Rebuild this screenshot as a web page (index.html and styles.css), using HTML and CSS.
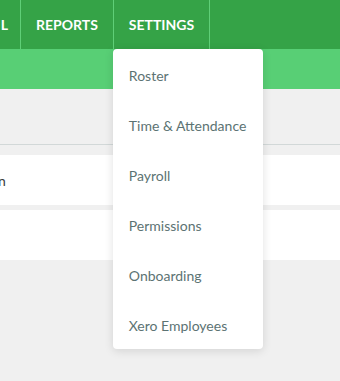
FILE: index.html
```
<!DOCTYPE html>
<html>
<head>
<meta charset="utf-8">
<link rel="stylesheet" href="styles.css">
</head>
<body>
<div class="page">
  <nav class="topnav">
    <div class="nav-item nav-cut">L</div>
    <div class="nav-item">REPORTS</div>
    <div class="nav-item nav-open">SETTINGS
      <ul class="dropdown">
        <li>Roster</li>
        <li>Time &amp; Attendance</li>
        <li>Payroll</li>
        <li>Permissions</li>
        <li>Onboarding</li>
        <li>Xero Employees</li>
      </ul>
    </div>
  </nav>
  <div class="subbar"></div>
  <div class="content">
    <div class="header-row"></div>
    <div class="row"><span class="row-text">n</span></div>
    <div class="row"></div>
  </div>
</div>
</body>
</html>
```
FILE: styles.css
```
* { box-sizing: border-box; }
html, body { margin: 0; padding: 0; }
body {
  width: 340px;
  height: 381px;
  overflow: hidden;
  background: #f0f0f0;
  font-family: Lato, "Open Sans", sans-serif;
}
.page { width: 340px; }
.topnav {
  display: flex;
  height: 49px;
  background: #35a347;
  margin-left: -76px;
}
.nav-item {
  position: relative;
  display: flex;
  align-items: center;
  padding: 0 15px;
  color: #fff;
  font-weight: 700;
  font-size: 14px;
  border-right: 1px solid #5fcf77;
}
.nav-cut { width: 97px; justify-content: flex-end; padding-right: 12px; }
.nav-open { width: 96px; }
.dropdown {
  position: absolute;
  top: 49px;
  left: -1px;
  width: 150px;
  margin: 0;
  padding: 0;
  list-style: none;
  background: #fff;
  border-radius: 4px;
  box-shadow: 0 2px 10px rgba(0, 0, 0, 0.12);
  z-index: 5;
}
.dropdown li {
  height: 50px;
  display: flex;
  align-items: center;
  padding: 2px 16px 0;
  color: #5c7373;
  font-weight: 400;
  font-size: 14px;
}
.subbar {
  height: 40px;
  background: #58cf75;
}
.header-row {
  height: 56px;
  border-bottom: 1px solid #d2d8d8;
}
.row {
  height: 50px;
  margin-top: 10px;
  background: #fff;
  display: flex;
  align-items: center;
  color: #3a3a3a;
  font-size: 14px;
}
.row + .row { margin-top: 5px; }
.row-text { margin-left: -2px; }
```
